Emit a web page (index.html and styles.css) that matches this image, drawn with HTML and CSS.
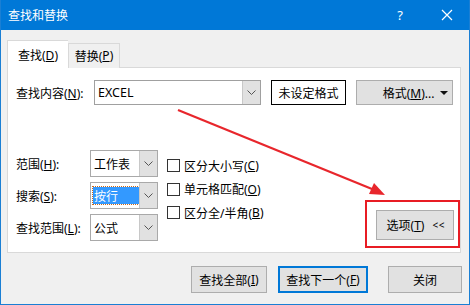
FILE: index.html
```html
<!DOCTYPE html>
<html lang="zh-CN">

<head>
    <meta charset="UTF-8">
    <link rel="stylesheet" href="styles.css">
    <title>查找和替换</title>
</head>

<body>
    <div class="window">
        <div class="titlebar">
            <span class="title">查找和替换</span>
            <span class="help">?</span>
            <svg class="close" width="12" height="12" viewBox="0 0 12 12">
                <path d="M1 1 L11 11 M11 1 L1 11" stroke="#fff" stroke-width="1.2" fill="none" />
            </svg>
        </div>

        <div class="content">
            <div class="tabs">
                <div class="tab active">查找(<u>D</u>)</div>
                <div class="tab">替换(<u>P</u>)</div>
            </div>

            <div class="panel">
                <div class="find-row">
                    <label class="find-label">查找内容(<u>N</u>):</label>
                    <div class="combo find-combo">
                        <span class="combo-text">EXCEL</span>
                        <span class="combo-btn">
                            <svg width="9" height="5" viewBox="0 0 9 5"><path d="M0.5 0.5 L4.5 4.5 L8.5 0.5" stroke="#555" fill="none" /></svg>
                        </span>
                    </div>
                    <div class="format-preview">未设定格式</div>
                    <div class="btn format-btn">
                        <span>格式(<u>M</u>)...</span>
                        <svg class="caret" width="8" height="4" viewBox="0 0 8 4"><path d="M0 0 L8 0 L4 4 Z" fill="#111" /></svg>
                    </div>
                </div>

                <div class="options">
                    <div class="selects">
                        <div class="sel-row">
                            <label class="sel-label">范围(<u>H</u>):</label>
                            <div class="combo sel">
                                <span class="combo-text">工作表</span>
                                <span class="combo-btn">
                                    <svg width="9" height="5" viewBox="0 0 9 5"><path d="M0.5 0.5 L4.5 4.5 L8.5 0.5" stroke="#555" fill="none" /></svg>
                                </span>
                            </div>
                        </div>
                        <div class="sel-row">
                            <label class="sel-label">搜索(<u>S</u>):</label>
                            <div class="combo sel">
                                <span class="combo-text"><span class="picked">按行</span></span>
                                <span class="combo-btn">
                                    <svg width="9" height="5" viewBox="0 0 9 5"><path d="M0.5 0.5 L4.5 4.5 L8.5 0.5" stroke="#555" fill="none" /></svg>
                                </span>
                            </div>
                        </div>
                        <div class="sel-row">
                            <label class="sel-label">查找范围(<u>L</u>):</label>
                            <div class="combo sel">
                                <span class="combo-text">公式</span>
                                <span class="combo-btn">
                                    <svg width="9" height="5" viewBox="0 0 9 5"><path d="M0.5 0.5 L4.5 4.5 L8.5 0.5" stroke="#555" fill="none" /></svg>
                                </span>
                            </div>
                        </div>
                    </div>

                    <div class="checks">
                        <div class="check"><span class="box"></span>区分大小写(<u>C</u>)</div>
                        <div class="check"><span class="box"></span>单元格匹配(<u>O</u>)</div>
                        <div class="check"><span class="box"></span>区分全/半角(<u>B</u>)</div>
                    </div>

                    <div class="highlight">
                        <div class="btn options-btn">选项(<u>T</u>)<span class="chev">&lt; &lt;</span></div>
                    </div>
                </div>
            </div>

            <div class="actions">
                <div class="btn act-all">查找全部(<u>I</u>)</div>
                <div class="btn act-next">查找下一个(<u>F</u>)</div>
                <div class="btn act-close">关闭</div>
            </div>
        </div>

        <!-- annotation arrow -->
        <svg class="arrow" width="470" height="305" viewBox="0 0 470 305">
            <line x1="178" y1="110" x2="372" y2="189" stroke="#e8262c" stroke-width="2.2" />
            <path d="M385 195 L369 194 L374 183 Z" fill="#e8262c" />
        </svg>
    </div>
</body>

</html>
```

FILE: styles.css
```css
* {
    box-sizing: border-box;
}

body {
    margin: 0;
    font-family: "Noto Sans", "Noto Sans CJK SC", sans-serif;
    font-size: 12px;
    color: #000;
    background: #fff;
}

u {
    text-decoration: underline;
    text-underline-offset: 1px;
}

.window {
    position: relative;
    width: 470px;
    height: 305px;
    background: #f0f0f0;
    border: 1px solid #1a7fd4;
    border-top: none;
    overflow: hidden;
}

.titlebar {
    height: 30px;
    background: #0078d7;
    color: #fff;
    display: flex;
    align-items: center;
    padding-left: 8px;
    margin: 0 -1px;
}

.title {
    flex: 1;
    font-size: 12px;
}

.help {
    font-size: 13px;
    margin-right: 38px;
}

.close {
    margin-right: 17px;
}

.content {
    padding: 10px 0 0 6px;
}

.tabs {
    display: flex;
    align-items: flex-end;
    height: 28px;
    position: relative;
    z-index: 1;
}

.tab {
    height: 25px;
    width: 52px;
    border: 1px solid #d9d9d9;
    border-bottom: none;
    background: #f0f0f0;
    display: flex;
    align-items: center;
    justify-content: center;
    padding-bottom: 1px;
}

.tab.active {
    height: 28px;
    width: 61px;
    background: #fff;
    border-right: none;
    padding-top: 2px;
}

.panel {
    width: 454px;
    height: 186px;
    margin-top: -1px;
    background: #fff;
    border: 1px solid #d9d9d9;
    padding: 12px 0 0 8px;
    display: flex;
    flex-direction: column;
}

.find-row {
    display: flex;
    align-items: center;
    height: 25px;
}

.find-label {
    width: 78px;
}

.combo {
    display: flex;
    background: #fff;
    border: 1px solid #a9a9a9;
}

.combo-text {
    flex: 1;
    display: flex;
    align-items: center;
    padding-left: 3px;
}

.combo-btn {
    width: 18px;
    background: #e1e1e1;
    border-left: 1px solid #c8c8c8;
    display: flex;
    align-items: center;
    justify-content: center;
}

.find-combo {
    width: 167px;
    height: 25px;
    border-color: #a0a0a0;
}

.find-combo .combo-text {
    font-size: 12.5px;
}

.format-preview {
    width: 75px;
    height: 25px;
    margin-left: 10px;
    border: 1px solid #000;
    background: #fff;
    display: flex;
    align-items: center;
    justify-content: center;
}

.btn {
    background: #e1e1e1;
    border: 1px solid #adadad;
    display: flex;
    align-items: center;
    justify-content: center;
}

.format-btn {
    width: 97px;
    height: 25px;
    margin-left: 10px;
    padding-left: 8px;
    position: relative;
}

.format-btn .caret {
    position: absolute;
    right: 4px;
    top: 10px;
}

.options {
    flex: 1;
    display: flex;
    margin-top: 45px;
}

.selects {
    display: flex;
    flex-direction: column;
    gap: 5px;
}

.sel-row {
    display: flex;
    align-items: center;
    height: 27px;
}

.sel-label {
    width: 74px;
}

.sel {
    width: 68px;
    height: 27px;
}

.picked {
    background: #3399ff;
    color: #fff;
    outline: 1px dotted #c8691c;
    width: 46px;
    height: 17px;
    display: flex;
    align-items: center;
    padding-left: 1px;
    margin-left: -1px;
}

.checks {
    margin-left: 9px;
    padding-top: 4px;
    display: flex;
    flex-direction: column;
}

.check {
    height: 23.5px;
    display: flex;
    align-items: center;
}

.box {
    width: 13px;
    height: 13px;
    border: 1px solid #333;
    background: #fff;
    margin-right: 4px;
}

.highlight {
    margin-left: auto;
    margin-right: 0;
    align-self: flex-end;
    margin-bottom: 4px;
    width: 95px;
    height: 48px;
    border: 2px solid #e81c24;
    padding: 8px 4px 6px 9px;
}

.options-btn {
    width: 78px;
    height: 30px;
}

.chev {
    font-size: 10px;
    margin-left: 8px;
    letter-spacing: -1px;
}

.actions {
    display: flex;
    margin-top: 13px;
    padding-left: 184px;
}

.actions .btn {
    height: 27px;
}

.act-all {
    width: 76px;
}

.act-next {
    width: 90px;
    margin-left: 11px;
    border: 2px solid #0078d7;
}

.act-close {
    width: 74px;
    margin-left: 20px;
}

.arrow {
    position: absolute;
    left: -1px;
    top: 0;
    pointer-events: none;
}
```
